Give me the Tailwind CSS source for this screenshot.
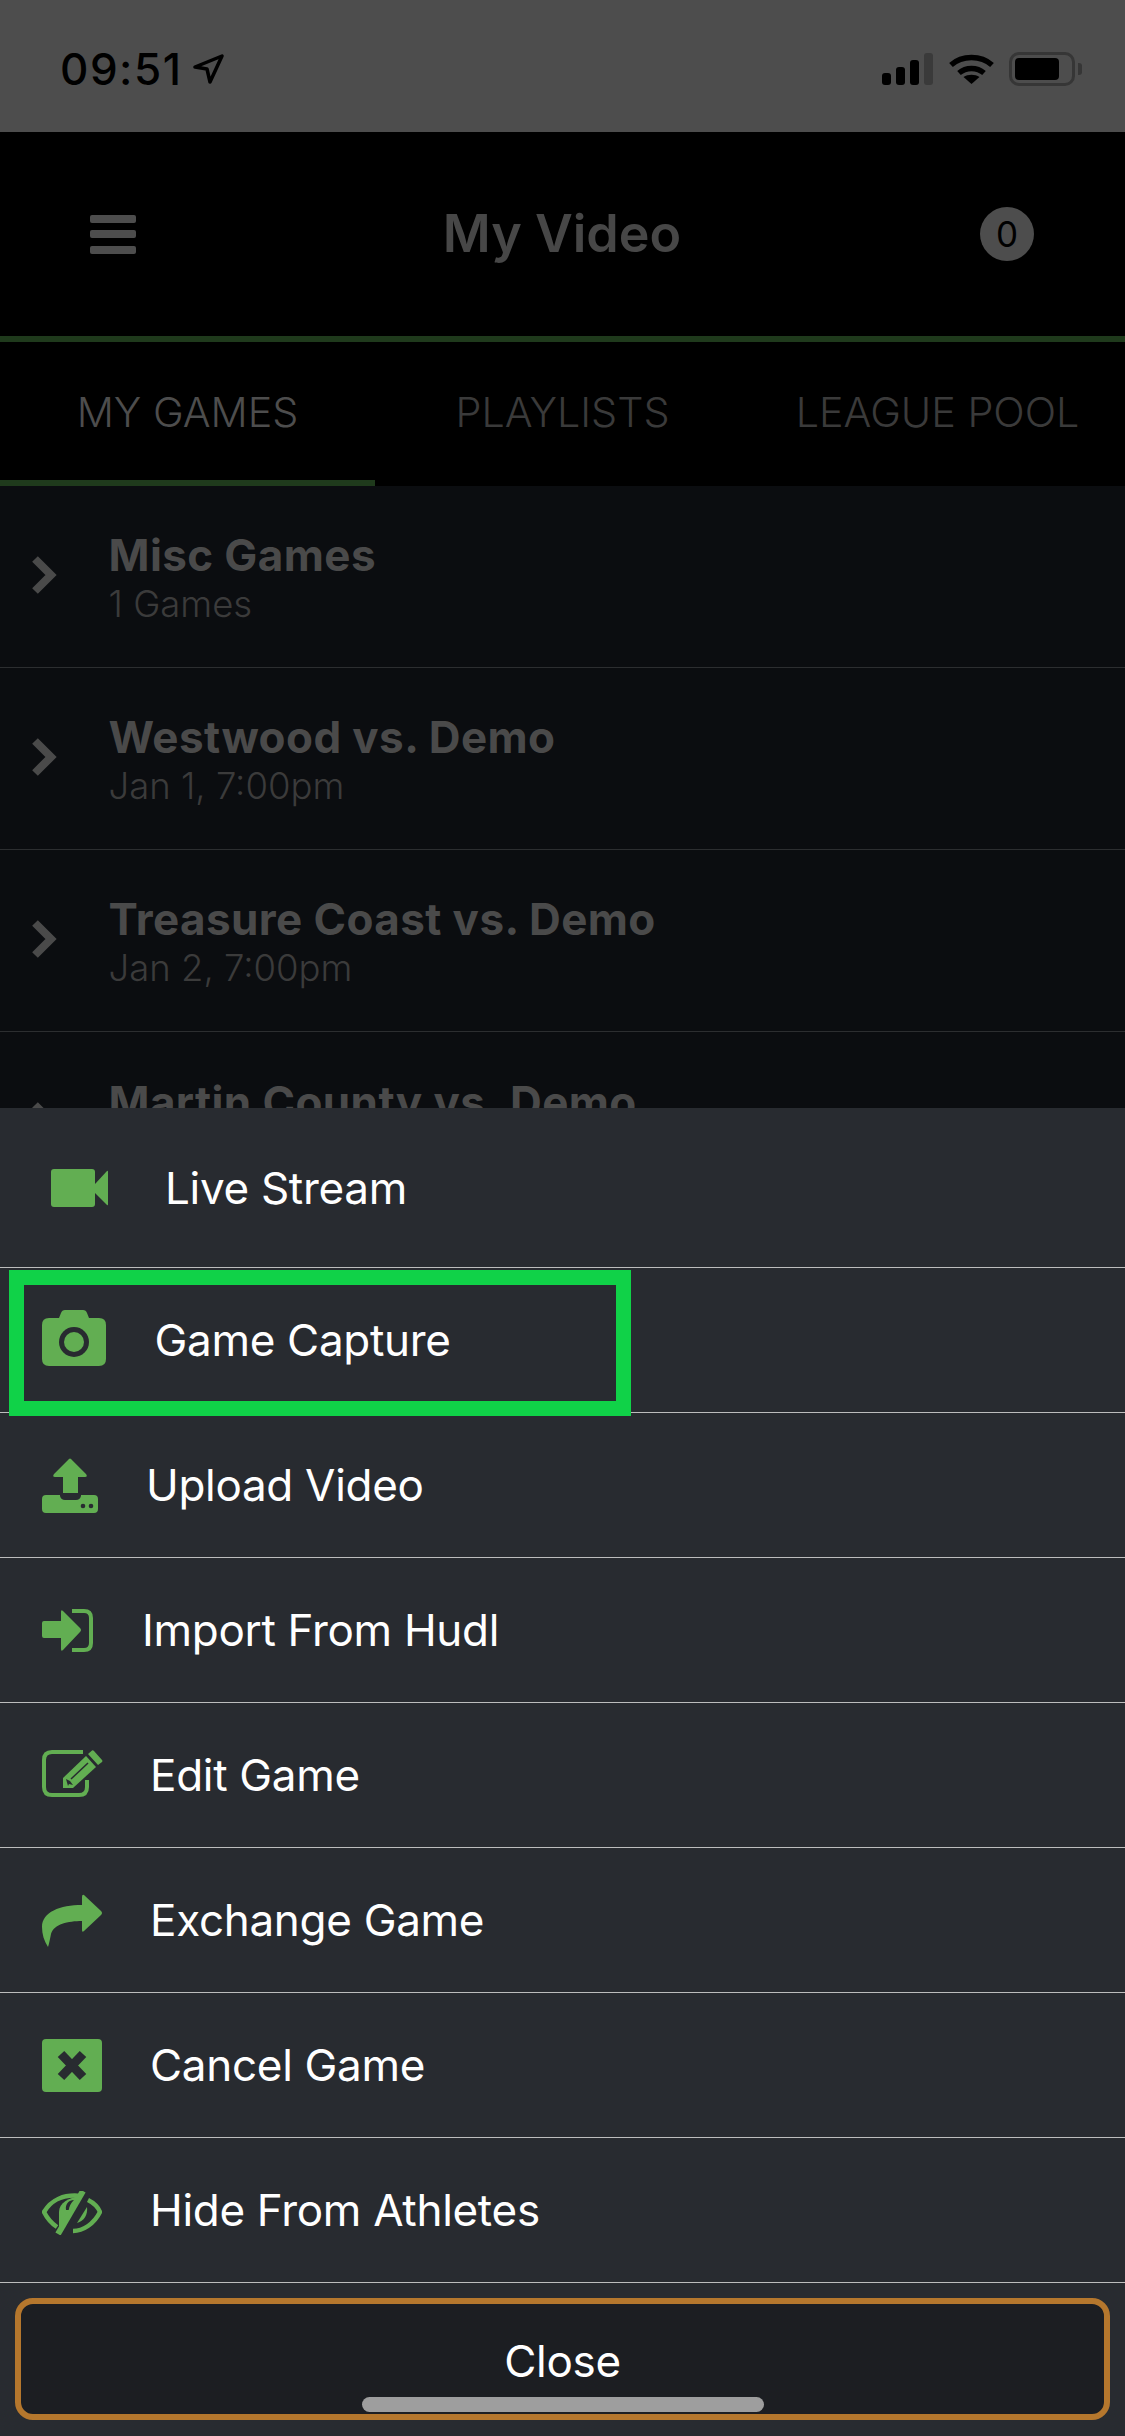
<!DOCTYPE html>
<html lang="en">

<head>
    <meta charset="UTF-8">
    <meta name="viewport" content="width=device-width, initial-scale=1.0">
    <title>My Video</title>
    <script src="https://cdn.jsdelivr.net/npm/@tailwindcss/browser@4"></script>
</head>

<body class="bg-black">
    <div class="relative w-[1125px] h-[2436px] overflow-hidden bg-[#0b0d10] font-['Inter',sans-serif]">

        <!-- Status bar -->
        <div class="h-[132px] bg-[#4d4d4d] flex items-start justify-between">
            <div class="flex items-center pl-[60px] pt-[42px] h-[96px]">
                <span class="text-[44px] leading-[54px] font-medium tracking-[1.5px] text-black">09:51</span>
                <svg class="ml-[11px]" width="32" height="32" viewBox="0 0 32 32" fill="none" stroke="#000" stroke-width="3.5" stroke-linejoin="round">
                    <path d="M2 14 L29 3 L17 29 L14 16 Z" />
                </svg>
            </div>
            <div class="flex items-start pt-[52px] pr-[43px]">
                <!-- Signal -->
                <svg width="52" height="33" viewBox="0 0 52 33">
                    <rect x="0" y="21" width="9" height="12" rx="3" fill="#000" />
                    <rect x="14" y="15" width="9" height="18" rx="3" fill="#000" />
                    <rect x="28" y="8" width="9" height="25" rx="3" fill="#000" />
                    <rect x="42" y="1" width="9" height="32" rx="3" fill="#3a3a3a" />
                </svg>
                <!-- Wifi -->
                <svg class="ml-[14px]" width="47" height="33" viewBox="0 0 47 33" fill="none" stroke="#000" stroke-width="5.5">
                    <path d="M3 13 C14 3 33 3 44 13" />
                    <path d="M11 21 C18 15 29 15 36 21" />
                    <path d="M23.5 32 L15.5 25 C20 22 27 22 31.5 25 Z" fill="#000" stroke="none" />
                </svg>
                <!-- Battery -->
                <div class="ml-[14px] flex items-center h-[34px]">
                    <div class="w-[66px] h-[34px] rounded-[10px] border-[3px] border-[#363636] p-[3px]">
                        <div class="w-[44px] h-[22px] rounded-[4px] bg-black"></div>
                    </div>
                    <div class="ml-[3px] w-[4px] h-[12px] rounded-r-[3px] bg-[#363636]"></div>
                </div>
            </div>
        </div>

        <!-- Nav bar -->
        <div class="h-[210px] bg-black border-b-[6px] border-[#1f3a1c] grid grid-cols-[1fr_auto_1fr] items-center pl-[90px] pr-[91px]">
            <div class="flex flex-col gap-[7.5px]">
                <div class="w-[46px] h-[8px] rounded-[2px] bg-[#4d4d4d]"></div>
                <div class="w-[46px] h-[8px] rounded-[2px] bg-[#4d4d4d]"></div>
                <div class="w-[46px] h-[8px] rounded-[2px] bg-[#4d4d4d]"></div>
            </div>
            <span class="text-[52px] leading-[60px] font-semibold text-[#474747]">My Video</span>
            <div class="justify-self-end w-[54px] h-[54px] rounded-full bg-[#4d4d4d] flex items-center justify-center text-[35px] text-black">0</div>
        </div>

        <!-- Tabs -->
        <div class="h-[144px] bg-black grid grid-cols-3 text-[41.3px] font-light">
            <div class="flex items-center justify-center pt-[4px] border-b-[6px] border-[#1f3a1c] text-[#4d4d4d]">MY GAMES</div>
            <div class="flex items-center justify-center pt-[4px] border-b-[6px] border-transparent text-[#3a3a3a]">PLAYLISTS</div>
            <div class="flex items-center justify-center pt-[4px] border-b-[6px] border-transparent text-[#3a3a3a]">LEAGUE POOL</div>
        </div>

        <!-- Game list -->
        <div>
            <div class="h-[182px] border-b border-[#2c2e30] flex items-center">
                <svg class="ml-[32px] mr-[51.5px] -mt-[4px] shrink-0" width="25" height="38" viewBox="0 0 25 38" fill="none" stroke="#4a4a4a" stroke-width="8"><path d="M3 3 L19 19 L3 35" /></svg>
                <div class="mt-[5px]">
                    <div class="text-[44px] leading-[50px] font-bold tracking-[0.4px] text-[#4a4a4a]">Misc Games</div>
                    <div class="text-[36.5px] leading-[48px] font-light text-[#3b3b3b]">1 Games</div>
                </div>
            </div>
            <div class="h-[182px] border-b border-[#2c2e30] flex items-center">
                <svg class="ml-[32px] mr-[51.5px] -mt-[4px] shrink-0" width="25" height="38" viewBox="0 0 25 38" fill="none" stroke="#4a4a4a" stroke-width="8"><path d="M3 3 L19 19 L3 35" /></svg>
                <div class="mt-[5px]">
                    <div class="text-[44px] leading-[50px] font-bold tracking-[0.4px] text-[#4a4a4a]">Westwood vs. Demo</div>
                    <div class="text-[36.5px] leading-[48px] font-light text-[#3b3b3b]">Jan 1, 7:00pm</div>
                </div>
            </div>
            <div class="h-[182px] border-b border-[#2c2e30] flex items-center">
                <svg class="ml-[32px] mr-[51.5px] -mt-[4px] shrink-0" width="25" height="38" viewBox="0 0 25 38" fill="none" stroke="#4a4a4a" stroke-width="8"><path d="M3 3 L19 19 L3 35" /></svg>
                <div class="mt-[5px]">
                    <div class="text-[44px] leading-[50px] font-bold tracking-[0.4px] text-[#4a4a4a]">Treasure Coast vs. Demo</div>
                    <div class="text-[36.5px] leading-[48px] font-light text-[#3b3b3b]">Jan 2, 7:00pm</div>
                </div>
            </div>
            <div class="h-[182px] flex items-center">
                <svg class="ml-[32px] mr-[51.5px] -mt-[4px] shrink-0" width="25" height="38" viewBox="0 0 25 38" fill="none" stroke="#4a4a4a" stroke-width="8"><path d="M3 3 L19 19 L3 35" /></svg>
                <!-- Subtitle of this row is hidden behind the sheet -->
                <div class="mt-[5px] pb-[48px]">
                    <div class="text-[44px] leading-[50px] font-bold tracking-[0.4px] text-[#4a4a4a]">Martin County vs. Demo</div>
                </div>
            </div>
        </div>

        <!-- Action sheet -->
        <div class="absolute left-0 right-0 bottom-0 h-[1328px] bg-[#282b30] text-[44px] tracking-[-0.3px] text-white">
            <div class="h-[160px] border-b border-[#bdbdbd] flex items-center">
                <span class="flex w-[165px] pl-[51px] shrink-0">
                    <svg width="57" height="38" viewBox="0 0 57 38" fill="#62ae52">
                        <rect width="44" height="38" rx="3" />
                        <path d="M44 15 L56 2 Q57 1 57 3 V35 Q57 37 56 36 L44 24 Z" />
                    </svg>
                </span>
                <span>Live Stream</span>
            </div>
            <div class="h-[145px] border-b border-[#bdbdbd] flex items-center">
                <span class="flex w-[154.5px] pl-[42px] -mt-[4px] shrink-0">
                    <svg width="64" height="56" viewBox="0 0 64 56" fill="#62ae52">
                        <path d="M17 8 L19 3 Q20 0 23 0 H41 Q44 0 45 3 L47 8 H57 Q64 8 64 15 V49 Q64 56 57 56 H7 Q0 56 0 49 V15 Q0 8 7 8 Z" />
                        <circle cx="32" cy="32" r="15" fill="#282b30" />
                        <circle cx="32" cy="32" r="10" />
                    </svg>
                </span>
                <span>Game Capture</span>
            </div>
            <div class="h-[145px] border-b border-[#bdbdbd] flex items-center">
                <span class="flex w-[146px] pl-[42px] shrink-0">
                    <svg width="56" height="55" viewBox="0 0 56 55" fill="#62ae52">
                        <path d="M27 1 Q28 0 29 1 L44 16 Q46 19 43 19 H36 V35 H21 V19 H13 Q10 19 12 16 Z" />
                        <path d="M4 37 H18 V38 Q19 42 23 42 H34 Q38 42 39 38 V37 H52 Q56 37 56 41 V51 Q56 55 52 55 H4 Q0 55 0 51 V41 Q0 37 4 37 Z" />
                        <circle cx="41" cy="48" r="2.3" fill="#282b30" />
                        <circle cx="49" cy="48" r="2.3" fill="#282b30" />
                    </svg>
                </span>
                <span>Upload Video</span>
            </div>
            <div class="h-[145px] border-b border-[#bdbdbd] flex items-center">
                <span class="flex w-[142px] pl-[42px] shrink-0">
                    <svg width="51" height="43" viewBox="0 0 51 43" fill="#62ae52">
                        <path d="M2 12 H19 V3 Q19 0 21 2 L38 19 Q40 21 38 23 L21 41 Q19 43 19 40 V29 H2 Q0 29 0 27 V14 Q0 12 2 12 Z" />
                        <path d="M30 2 H42 Q49 2 49 9 V34 Q49 41 42 41 H30" fill="none" stroke="#62ae52" stroke-width="4" />
                    </svg>
                </span>
                <span>Import From Hudl</span>
            </div>
            <div class="h-[145px] border-b border-[#bdbdbd] flex items-center">
                <span class="flex w-[150px] pl-[42px] -mt-[3px] shrink-0">
                    <svg width="61" height="47" viewBox="0 0 61 47" fill="#62ae52">
                        <path d="M41 2 H10 Q2 2 2 10 V37 Q2 45 10 45 H37 Q45 45 45 37 V30" fill="none" stroke="#62ae52" stroke-width="4" />
                        <path d="M21 38 V28 L44 6 L54 17 L31 38 Z" />
                        <path d="M46 4 L50 0.5 Q51 0 52 1 L60 10 Q61 11 60 12 L56 15 Z" />
                        <path d="M29 29 L46 13" stroke="#282b30" stroke-width="1.5" fill="none" />
                        <path d="M24 29 L28 31 L31 35 L27 34 L26 36 Z" fill="#282b30" />
                    </svg>
                </span>
                <span>Edit Game</span>
            </div>
            <div class="h-[145px] border-b border-[#bdbdbd] flex items-center">
                <span class="flex w-[150px] pl-[42px] shrink-0">
                    <svg width="60" height="53" viewBox="0 0 60 53" fill="#62ae52">
                        <path d="M40 3 Q40 0 42 1 L59 17 Q61 19 59 21 L42 37 Q40 39 40 36 V27 C26 27 12 30 9 40 C8 45 7 50 6 53 C2 47 0 40 0 33 C0 18 18 11 40 11 Z" />
                    </svg>
                </span>
                <span>Exchange Game</span>
            </div>
            <div class="h-[145px] border-b border-[#bdbdbd] flex items-center">
                <span class="flex w-[150px] pl-[42px] shrink-0">
                    <svg width="60" height="53" viewBox="0 0 60 53">
                        <rect width="60" height="53" rx="4" fill="#62ae52" />
                        <path d="M19 15 L41 38 M41 15 L19 38" stroke="#282b30" stroke-width="9" />
                    </svg>
                </span>
                <span>Cancel Game</span>
            </div>
            <div class="h-[145px] border-b border-[#bdbdbd] flex items-center">
                <span class="flex w-[150px] pl-[42px] mt-[6px] shrink-0">
                    <svg width="60" height="44" viewBox="0 0 60 44" fill="#62ae52">
                        <path d="M39 5 C22 3 9 9 2 21 C5 27 9 32 15 36" fill="none" stroke="#62ae52" stroke-width="4.5" />
                        <path d="M17 21 C17 12 27 6 39 5 L17 38 Z" />
                        <path d="M24 19 C23 13 27 9 32 9 C29 12 27 15 27 19 Z" fill="#282b30" />
                        <path d="M41 0 L16 43" stroke="#62ae52" stroke-width="6" fill="none" />
                        <path d="M46 9 C52 12 56 16 58 21 C52 33 41 40 31 40" fill="none" stroke="#62ae52" stroke-width="4.5" />
                        <path d="M45 16 C46 24 42 30 35 32 Z" />
                    </svg>
                </span>
                <span>Hide From Athletes</span>
            </div>

            <!-- Close button -->
            <div class="mx-[15px] mt-[15px] h-[122px] rounded-[18px] border-[6px] border-[#b5772d] bg-[#1c1e22] flex items-center justify-center pt-[4px]">Close</div>
        </div>

        <!-- Highlight box round Game Capture -->
        <div class="absolute left-[9px] top-[1270px] w-[622px] h-[146px] border-[15px] border-[#10d248]"></div>

        <!-- Home indicator -->
        <div class="absolute left-[362px] top-[2397px] w-[402px] h-[15px] rounded-full bg-[#9e9e9e]"></div>
    </div>
</body>

</html>
